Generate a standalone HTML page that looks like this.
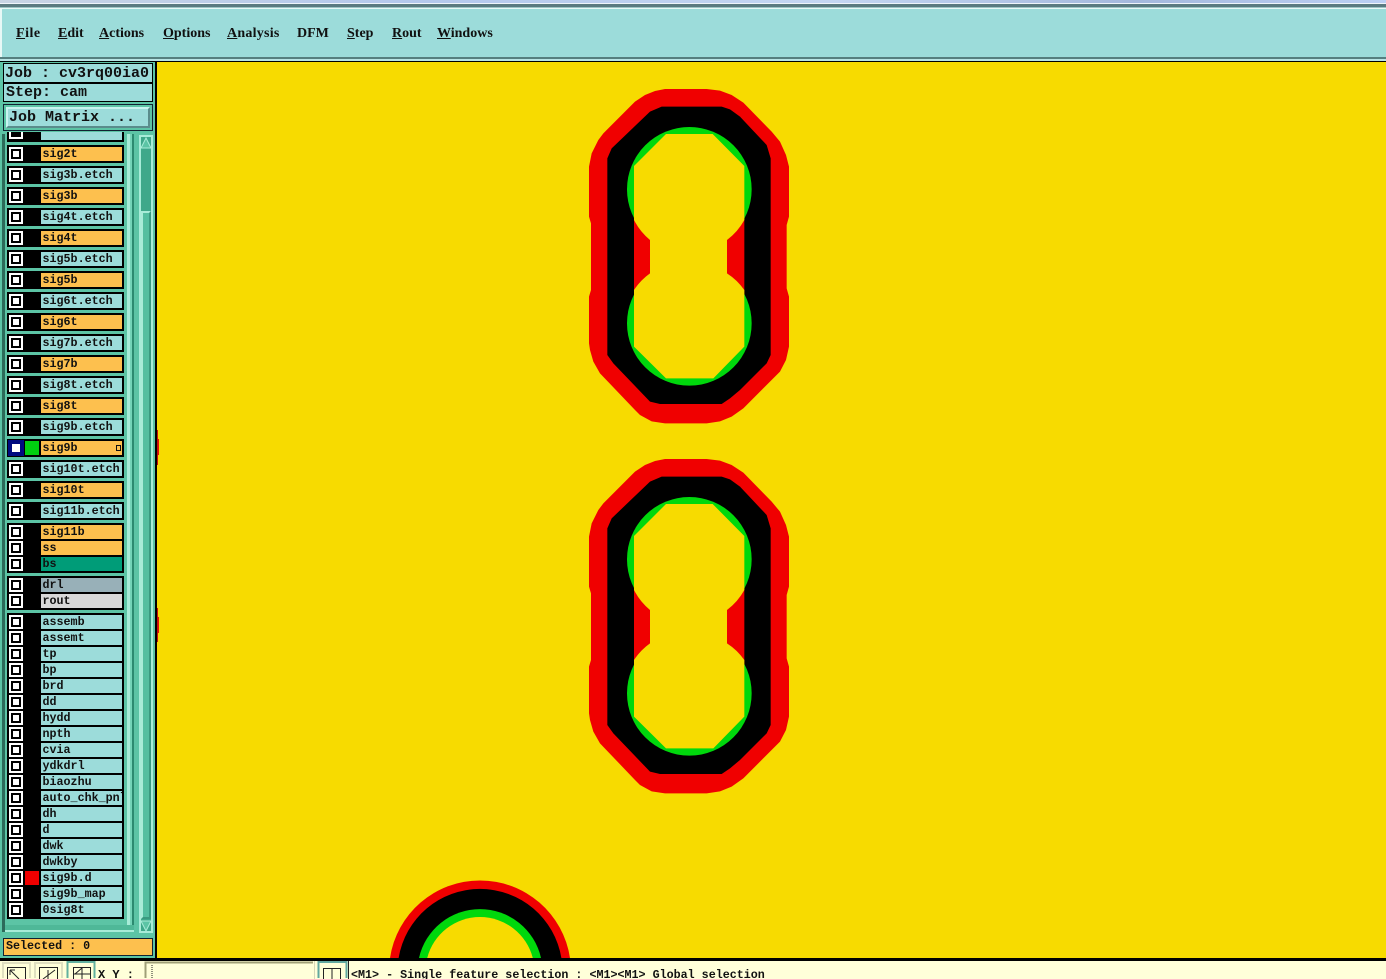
<!DOCTYPE html>
<html><head><meta charset="utf-8"><title>Genesis</title>
<style>
html,body{margin:0;padding:0;width:1386px;height:979px;overflow:hidden;background:#9cdcda}
#root{position:absolute;left:0;top:0;width:1386px;height:979px;overflow:hidden}
#root div,#root span,#root svg{position:absolute;box-sizing:border-box}
u,b{position:static}
#menu span{top:25px;font:bold 14px/17px "Liberation Serif",serif;color:#111;white-space:nowrap}
.t{font:bold 15px/18px "Liberation Mono",monospace;color:#111;white-space:pre}
.b{left:7px;width:117px;background:#000}
.c{left:9px;width:14px;height:14px;background:#fff}
.c:after{content:"";position:absolute;left:2px;top:2px;width:10px;height:10px;border:2px solid #000;background:#fff;box-sizing:border-box}
.l{left:41px;width:81px;height:14px;background:#9cdcda;font:bold 11.7px/14px "Liberation Mono",monospace;color:#111;padding-left:1.5px;white-space:pre;overflow:hidden}
.o{background:#fdc04e}
</style></head>
<body>
<div id="root">
<!-- top window strip -->
<div style="left:0;top:0;width:1386px;height:3px;background:linear-gradient(90deg,#c8d4e4,#b4c8ec 30%,#c4d6f2 60%,#a4b8dc 82%,#bcd0f4)"></div>
<div style="left:0;top:3px;width:1386px;height:1px;background:#eef4fa"></div>
<div style="left:0;top:4px;width:1386px;height:3px;background:#5a7a80"></div>
<div style="left:0;top:7px;width:1386px;height:1px;background:#9cc4c4"></div>
<div style="left:0;top:8px;width:1386px;height:1px;background:#e8f8f6"></div>
<div style="left:0;top:9px;width:2px;height:50px;background:#e8f8f6"></div>
<div style="left:0;top:57px;width:1386px;height:2px;background:#557f7f"></div>
<div style="left:0;top:59px;width:1386px;height:2px;background:#b8e4e4"></div>
<div style="left:0;top:61px;width:1386px;height:1px;background:#000"></div>
<div id="menu">
<span style="left:16px;letter-spacing:.5px"><u>F</u>ile</span>
<span style="left:58px"><u>E</u>dit</span>
<span style="left:99px"><u>A</u>ctions</span>
<span style="left:163px"><u>O</u>ptions</span>
<span style="left:227px;letter-spacing:.25px"><u>A</u>nalysis</span>
<span style="left:297px">DFM</span>
<span style="left:347px"><u>S</u>tep</span>
<span style="left:392px"><u>R</u>out</span>
<span style="left:437px"><u>W</u>indows</span>
</div>

<!-- sidebar -->
<div style="left:0;top:62px;width:155px;height:896px;background:#5cc4a5"></div>
<div style="left:2px;top:134px;width:3px;height:798px;background:#2c6a5a"></div>
<div style="left:155px;top:62px;width:2px;height:896px;background:#000"></div>
<div style="left:3px;top:63px;width:150px;height:20px;background:#9cdcda;border:1px solid #000"></div>
<div class="t" style="left:5px;top:65px">Job : cv3rq00ia0</div>
<div style="left:3px;top:83px;width:150px;height:19px;background:#9cdcda;border:1px solid #000"></div>
<div class="t" style="left:6px;top:84px">Step: cam</div>
<div style="left:3px;top:104px;width:150px;height:27px;background:#5cc4a5;border:1px solid #123"></div>
<div style="left:6px;top:107px;width:144px;height:21px;background:#9cdcda;border:2px solid;border-color:#c8f4f0 #5a8c8c #5a8c8c #c8f4f0"></div>
<div class="t" style="left:9px;top:109px">Job Matrix ...</div>

<!-- scroll frame -->
<div style="left:127px;top:134px;width:3px;height:798px;background:#a8ecd8"></div>
<div style="left:130px;top:134px;width:2px;height:798px;background:#74d4b8"></div>
<div style="left:132px;top:134px;width:2px;height:798px;background:#2c8a70"></div>
<div style="left:5px;top:925px;width:129px;height:7px;background:#4fb898;border-bottom:2px solid #a8ecd8"></div>
<div style="left:139px;top:135px;width:14px;height:798px;background:#a8ecd8"></div>
<div style="left:141px;top:137px;width:10px;height:794px;background:#3fa88a"></div>
<div style="left:141px;top:211px;width:10px;height:708px;background:#54bfa0;border:2px solid;border-color:#a8ecd8 #3a9a80 #3a9a80 #a8ecd8"></div>
<svg style="left:140px;top:137px" width="12" height="12"><path d="M6 1 L11 11 H1 Z" fill="#5cc4a5" stroke="#a8ecd8"/></svg>
<svg style="left:140px;top:920px" width="12" height="12"><path d="M1 1 H11 L6 11 Z" fill="#5cc4a5" stroke="#a8ecd8"/></svg>

<!-- layer list -->
<div class="b" style="top:132px;height:10px"></div>
<div style="left:9px;top:132px;width:14px;height:7px;background:#fff"></div>
<div style="left:11px;top:132px;width:10px;height:5px;background:#000"></div>
<div class="l" style="top:132px;height:8px"></div>

<div class="b" style="top:145px;height:18px"></div><div class="c" style="top:147px"></div><div class="l o" style="top:147px">sig2t</div>
<div class="b" style="top:166px;height:18px"></div><div class="c" style="top:168px"></div><div class="l" style="top:168px">sig3b.etch</div>
<div class="b" style="top:187px;height:18px"></div><div class="c" style="top:189px"></div><div class="l o" style="top:189px">sig3b</div>
<div class="b" style="top:208px;height:18px"></div><div class="c" style="top:210px"></div><div class="l" style="top:210px">sig4t.etch</div>
<div class="b" style="top:229px;height:18px"></div><div class="c" style="top:231px"></div><div class="l o" style="top:231px">sig4t</div>
<div class="b" style="top:250px;height:18px"></div><div class="c" style="top:252px"></div><div class="l" style="top:252px">sig5b.etch</div>
<div class="b" style="top:271px;height:18px"></div><div class="c" style="top:273px"></div><div class="l o" style="top:273px">sig5b</div>
<div class="b" style="top:292px;height:18px"></div><div class="c" style="top:294px"></div><div class="l" style="top:294px">sig6t.etch</div>
<div class="b" style="top:313px;height:18px"></div><div class="c" style="top:315px"></div><div class="l o" style="top:315px">sig6t</div>
<div class="b" style="top:334px;height:18px"></div><div class="c" style="top:336px"></div><div class="l" style="top:336px">sig7b.etch</div>
<div class="b" style="top:355px;height:18px"></div><div class="c" style="top:357px"></div><div class="l o" style="top:357px">sig7b</div>
<div class="b" style="top:376px;height:18px"></div><div class="c" style="top:378px"></div><div class="l" style="top:378px">sig8t.etch</div>
<div class="b" style="top:397px;height:18px"></div><div class="c" style="top:399px"></div><div class="l o" style="top:399px">sig8t</div>
<div class="b" style="top:418px;height:18px"></div><div class="c" style="top:420px"></div><div class="l" style="top:420px">sig9b.etch</div>
<div class="b" style="top:439px;height:18px"></div>
<div style="left:8px;top:440px;width:16px;height:16px;background:#000a80"></div>
<div style="left:12px;top:444px;width:8px;height:8px;background:#fff"></div>
<div style="left:25px;top:441px;width:14px;height:14px;background:#00d010"></div>
<div class="l o" style="top:441px">sig9b</div>
<div style="left:116px;top:445px;width:5px;height:6px;border:1px solid #111"></div>
<div class="b" style="top:460px;height:18px"></div><div class="c" style="top:462px"></div><div class="l" style="top:462px">sig10t.etch</div>
<div class="b" style="top:481px;height:18px"></div><div class="c" style="top:483px"></div><div class="l o" style="top:483px">sig10t</div>
<div class="b" style="top:502px;height:18px"></div><div class="c" style="top:504px"></div><div class="l" style="top:504px">sig11b.etch</div>

<div class="b" style="top:523px;height:50px"></div>
<div class="c" style="top:525px"></div><div class="l o" style="top:525px">sig11b</div>
<div class="c" style="top:541px"></div><div class="l o" style="top:541px">ss</div>
<div class="c" style="top:557px"></div><div class="l" style="top:557px;background:#009c78">bs</div>

<div class="b" style="top:576px;height:34px"></div>
<div class="c" style="top:578px"></div><div class="l" style="top:578px;background:#98b0b8">drl</div>
<div class="c" style="top:594px"></div><div class="l" style="top:594px;background:#d8d8d8">rout</div>

<div class="b" style="top:613px;height:306px"></div>
<div class="c" style="top:615px"></div><div class="l" style="top:615px">assemb</div>
<div class="c" style="top:631px"></div><div class="l" style="top:631px">assemt</div>
<div class="c" style="top:647px"></div><div class="l" style="top:647px">tp</div>
<div class="c" style="top:663px"></div><div class="l" style="top:663px">bp</div>
<div class="c" style="top:679px"></div><div class="l" style="top:679px">brd</div>
<div class="c" style="top:695px"></div><div class="l" style="top:695px">dd</div>
<div class="c" style="top:711px"></div><div class="l" style="top:711px">hydd</div>
<div class="c" style="top:727px"></div><div class="l" style="top:727px">npth</div>
<div class="c" style="top:743px"></div><div class="l" style="top:743px">cvia</div>
<div class="c" style="top:759px"></div><div class="l" style="top:759px">ydkdrl</div>
<div class="c" style="top:775px"></div><div class="l" style="top:775px">biaozhu</div>
<div class="c" style="top:791px"></div><div class="l" style="top:791px">auto_chk_pnl</div>
<div class="c" style="top:807px"></div><div class="l" style="top:807px">dh</div>
<div class="c" style="top:823px"></div><div class="l" style="top:823px">d</div>
<div class="c" style="top:839px"></div><div class="l" style="top:839px">dwk</div>
<div class="c" style="top:855px"></div><div class="l" style="top:855px">dwkby</div>
<div class="c" style="top:871px"></div><div style="left:25px;top:871px;width:14px;height:14px;background:#f00000"></div><div class="l" style="top:871px">sig9b.d</div>
<div class="c" style="top:887px"></div><div class="l" style="top:887px">sig9b_map</div>
<div class="c" style="top:903px"></div><div class="l" style="top:903px">0sig8t</div>

<div style="left:3px;top:938px;width:150px;height:18px;background:#fdc04e;border:1px solid #123"></div>
<div class="l" style="left:6px;top:939px;width:140px;height:15px;background:none;padding:0;font-size:11.7px;line-height:15px">Selected : 0</div>

<!-- canvas -->
<div style="left:157px;top:62px;width:1229px;height:896px;background:#f7db00;overflow:hidden">
<svg style="left:0;top:0" width="1229" height="896" viewBox="157 62 1229 896">
<defs>
<g id="s">
<path fill="#f00000" d="M255 27L380 27L420 32L455 45L490 68L575 155L600 185L618 225L627 260L627 410L620 435L620 625L627 650L627 800L618 840L600 875L570 905L490 985L455 1010L420 1024L380 1030L255 1030L215 1024L180 1005L165 990L60 880L40 845L30 810L27 790L27 650L33 630L33 430L27 410L27 260L35 220L55 180L70 160L165 65L195 45L225 33Z"/>
<path fill="#000" d="M245 80L425 80L450 88L480 110L560 195L572 235L572 825L560 850L480 930L450 955L425 972L240 972L210 965L100 850L82 825L82 235L95 205L210 95Z"/>
<rect fill="#f00000" x="162" y="410" width="331" height="240"/>
<circle fill="#00d80c" cx="328" cy="328" r="187"/>
<circle fill="#00d80c" cx="328" cy="730" r="187"/>
<path fill="#f7db00" d="M258 162L398 162L493 258L493 420A187 187 0 0 1 441 480L441 580A187 187 0 0 1 493 630L493 800L400 895L258 895L162 800L162 630A187 187 0 0 1 210 580L210 480A187 187 0 0 1 162 420L162 258Z"/>
</g>
</defs>
<use href="#s" transform="translate(580,80) scale(.33333)"/>
<use href="#s" transform="translate(580,450) scale(.33333)"/>
<path d="M390 958A91 91 0 0 1 570 958Z" fill="#f00000"/>
<path d="M398.600 958A82.500 82.500 0 0 1 561.400 958Z" fill="#000"/>
<path d="M419 958A62.500 62.500 0 0 1 541 958Z" fill="#00d80c"/>
<path d="M427.200 958A54.500 54.500 0 0 1 532.800 958Z" fill="#f7db00"/>
<rect x="157" y="430" width="1" height="35" fill="#c81008"/>
<rect x="158" y="439" width="1" height="16" fill="#e01008"/>
<rect x="157" y="608" width="1" height="34" fill="#c81008"/>
<rect x="158" y="617" width="1" height="16" fill="#e01008"/>
</svg>
</div>

<!-- bottom bar -->
<div style="left:0;top:958px;width:1386px;height:3px;background:#000"></div>
<div style="left:0;top:961px;width:1386px;height:18px;background:#ffffd9"></div>
<svg style="left:0;top:961px" width="352" height="18" viewBox="0 0 352 18">
<path d="M3 17V2H30V17" fill="none" stroke="#e0e0c0" stroke-width="2"/>
<path d="M35 17V2H62V17" fill="none" stroke="#e0e0c0" stroke-width="2"/>
<path d="M67.500 17V1H94.500V17" fill="none" stroke="#62b0a0" stroke-width="2"/>
<path d="M7.500 18V6.500H25.500V18" fill="none" stroke="#222"/>
<path d="M10 9L19 18M10 9V14M10 9H15" fill="none" stroke="#222"/>
<path d="M39.500 18V6.500H57.500V18" fill="none" stroke="#222"/>
<path d="M43 18L55 9M48 9V18" fill="none" stroke="#222"/>
<path d="M73.500 18V6.500H90.500V18" fill="none" stroke="#222"/>
<path d="M73 13H90M82 7V18M82 7L75 13" fill="none" stroke="#222"/>
<path d="M145.500 17V1.500H313" fill="none" stroke="#a0a078" stroke-width="2"/>
<path d="M314.500 18V0" fill="none" stroke="#d8d8b8" stroke-width="1"/>
<path d="M152 4V18" stroke="#222" stroke-dasharray="1 1" fill="none"/>
<path d="M318.500 17V1H346.500V17" fill="none" stroke="#62a8a0" stroke-width="2"/>
<path d="M348.500 0V18" stroke="#222"/>
<path d="M323.500 18V7.500H340.500V18" fill="none" stroke="#222"/>
<path d="M332 8V18" stroke="#222"/>
</svg>
<div class="t" style="left:98px;top:966px;height:13px;overflow:hidden;font-size:12px;line-height:18px">X Y :</div>
<div class="t" style="left:351px;top:966px;height:13px;overflow:hidden;font-size:11.7px;line-height:18px">&lt;M1&gt; - Single feature selection : &lt;M1&gt;&lt;M1&gt; Global selection</div>
</div>
</body></html>
